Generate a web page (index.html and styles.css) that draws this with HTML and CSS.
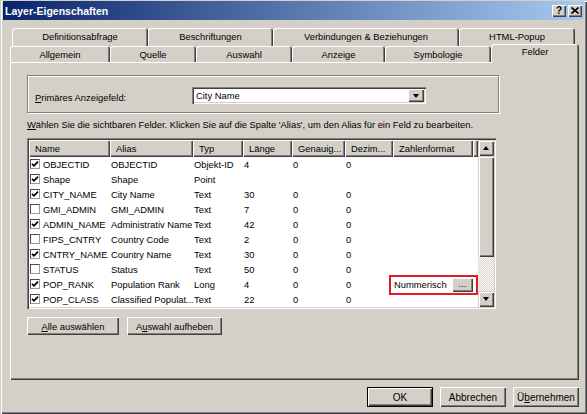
FILE: index.html
```html
<!DOCTYPE html>
<html lang="de">
<head>
<meta charset="utf-8">
<title>Layer-Eigenschaften</title>
<link rel="stylesheet" href="styles.css">
</head>
<body>
<div class="window">
  <div class="titlebar">
    <span class="title">Layer-Eigenschaften</span>
    <div class="tb-buttons">
      <span class="tb-btn help">?</span>
      <span class="tb-btn close"><svg width="8" height="7" viewBox="0 0 8 7"><path d="M0.5 0.5 L7.5 6.5 M7.5 0.5 L0.5 6.5" stroke="#000" stroke-width="1.6"/></svg></span>
    </div>
  </div>

  <div class="tabs">
    <div class="tabrow back">
      <div class="tab t-def">Definitionsabfrage</div>
      <div class="tab t-bes">Beschriftungen</div>
      <div class="tab t-ver">Verbindungen &amp; Beziehungen</div>
      <div class="tab t-html">HTML-Popup</div>
    </div>
    <div class="tabrow front">
      <div class="tab t-all">Allgemein</div>
      <div class="tab t-que">Quelle</div>
      <div class="tab t-aus">Auswahl</div>
      <div class="tab t-anz">Anzeige</div>
      <div class="tab t-sym">Symbologie</div>
      <div class="tab t-fel active">Felder</div>
    </div>
  </div>

  <div class="panel">
    <div class="group">
      <div class="field-row">
        <span class="field-label"><u>P</u>rimäres Anzeigefeld:</span>
        <div class="combo">
          <span class="combo-text">City Name</span>
          <span class="combo-btn"><span class="arrow-down"></span></span>
        </div>
      </div>
    </div>

    <div class="hint"><u>W</u>ählen Sie die sichtbaren Felder. Klicken Sie auf die Spalte 'Alias', um den Alias für ein Feld zu bearbeiten.</div>

    <div class="listview">
      <div class="lv-body">
        <table class="lv">
          <colgroup>
            <col class="c-name"><col class="c-alias"><col class="c-typ"><col class="c-len"><col class="c-gen"><col class="c-dez"><col class="c-fmt"><col class="c-fill">
          </colgroup>
          <thead>
            <tr><th>Name</th><th>Alias</th><th>Typ</th><th>Länge</th><th>Genauig...</th><th>Dezim...</th><th>Zahlenformat</th><th></th></tr>
          </thead>
          <tbody>
            <tr><td class="nm"><span class="cb on"></span>OBJECTID</td><td>OBJECTID</td><td>Objekt-ID</td><td>4</td><td>0</td><td>0</td><td></td><td></td></tr>
            <tr><td class="nm"><span class="cb on"></span>Shape</td><td>Shape</td><td>Point</td><td></td><td></td><td></td><td></td><td></td></tr>
            <tr><td class="nm"><span class="cb on"></span>CITY_NAME</td><td>City Name</td><td>Text</td><td>30</td><td>0</td><td>0</td><td></td><td></td></tr>
            <tr><td class="nm"><span class="cb"></span>GMI_ADMIN</td><td>GMI_ADMIN</td><td>Text</td><td>7</td><td>0</td><td>0</td><td></td><td></td></tr>
            <tr><td class="nm"><span class="cb on"></span>ADMIN_NAME</td><td>Administrativ Name</td><td>Text</td><td>42</td><td>0</td><td>0</td><td></td><td></td></tr>
            <tr><td class="nm"><span class="cb"></span>FIPS_CNTRY</td><td>Country Code</td><td>Text</td><td>2</td><td>0</td><td>0</td><td></td><td></td></tr>
            <tr><td class="nm"><span class="cb on"></span>CNTRY_NAME</td><td>Country Name</td><td>Text</td><td>30</td><td>0</td><td>0</td><td></td><td></td></tr>
            <tr><td class="nm"><span class="cb"></span>STATUS</td><td>Status</td><td>Text</td><td>50</td><td>0</td><td>0</td><td></td><td></td></tr>
            <tr><td class="nm"><span class="cb on"></span>POP_RANK</td><td>Population Rank</td><td>Long</td><td>4</td><td>0</td><td>0</td><td class="fmt-cell"><div class="fmt"><span>Nummerisch</span><span class="mini-btn">...</span><span class="highlight"></span></div></td><td></td></tr>
            <tr><td class="nm"><span class="cb on"></span>POP_CLASS</td><td>Classified Populat...</td><td>Text</td><td>22</td><td>0</td><td>0</td><td></td><td></td></tr>
          </tbody>
        </table>
      </div>
      <div class="vscroll">
        <span class="sb-btn"><span class="arrow-up"></span></span>
        <span class="sb-thumb"></span>
        <span class="sb-track"></span>
        <span class="sb-btn"><span class="arrow-down"></span></span>
      </div>
    </div>

    <div class="btn-row">
      <span class="btn b-all"><u>A</u>lle auswählen</span>
      <span class="btn b-none">A<u>u</u>swahl aufheben</span>
    </div>
  </div>

  <div class="footer">
    <span class="btn dlg default">OK</span>
    <span class="btn dlg">Abbrechen</span>
    <span class="btn dlg">Ü<u>b</u>ernehmen</span>
  </div>
</div>
</body>
</html>
```

FILE: styles.css
```css
* { box-sizing: border-box; }

body {
  margin: 0;
  background: #d4d0c8;
  font-family: "Liberation Sans", Arial, sans-serif;
  font-size: 9.4px;
  color: #000;
}

u { text-decoration: underline; text-underline-offset: 1px; }

.window {
  width: 587px;
  height: 414px;
  background: #d4d0c8;
  padding: 1px 3px 0 3px;
  box-shadow: inset 1px 1px #d4d0c8, inset 2px 2px #ffffff, inset -1px -1px #404040, inset -2px -2px #808080;
  overflow: hidden;
}

/* title bar */
.titlebar {
  height: 19px;
  display: flex;
  align-items: center;
  justify-content: space-between;
  padding: 0 2px 0 2px;
  background: linear-gradient(to right, #0a246a, #a6caf0);
}
.title {
  color: #fff;
  font-weight: bold;
  font-size: 10.5px;
}
.tb-buttons { display: flex; gap: 2px; }
.tb-btn {
  width: 14px;
  height: 12px;
  display: flex;
  align-items: center;
  justify-content: center;
  background: #d4d0c8;
  box-shadow: inset 1px 1px #ffffff, inset -1px -1px #404040, inset -2px -2px #808080;
  font-weight: bold;
  font-size: 10px;
  line-height: 1;
}

/* tabs */
.tabs { margin-top: 8px; }
.tabrow { display: flex; }
.tabrow.back { margin-left: 9px; height: 18px; }
.tabrow.front { margin-left: 7px; height: 16px; }
.tab {
  height: 100%;
  display: flex;
  align-items: center;
  justify-content: center;
  background: #d4d0c8;
  border-radius: 3px 3px 0 0;
  box-shadow: inset 1px 1px #ffffff, inset -1px 0 #404040, inset -2px 0 #808080;
  white-space: nowrap;
}
.tabrow.back .tab { padding-bottom: 1px; }
.t-def { width: 136px; }
.t-bes { width: 125px; }
.t-ver { width: 186px; }
.t-html { width: 116px; }
.t-all { width: 100px; }
.t-que { width: 86px; }
.t-aus { width: 96px; }
.t-anz { width: 93px; }
.t-sym { width: 106px; }
.t-fel { width: 88px; }
.tab.active {
  position: relative;
  z-index: 1;
  height: 19px;
  margin-top: -2px;
  align-items: flex-start;
  padding-top: 2px;
}

/* panel */
.panel {
  margin-left: 7px;
  width: 569px;
  height: 318px;
  padding: 13px 0 0 17px;
  box-shadow: inset 1px 1px #ffffff, inset -1px -1px #404040, inset -2px -2px #808080;
}

.group {
  width: 472px;
  height: 38px;
  padding: 11px 0 0 7px;
  border: 1px solid #808080;
  box-shadow: inset 1px 1px #ffffff, 1px 1px 0 #ffffff;
}
.field-row { display: flex; align-items: center; height: 17px; }
.field-label { width: 157px; padding-top: 3px; }
.combo {
  width: 234px;
  height: 17px;
  display: flex;
  align-items: center;
  justify-content: space-between;
  background: #fff;
  padding: 2px;
  box-shadow: inset 1px 1px #808080, inset 2px 2px #404040, inset -1px -1px #ffffff, inset -2px -2px #d4d0c8;
}
.combo-text { padding-left: 2px; }
.combo-btn {
  width: 16px;
  height: 13px;
  display: flex;
  align-items: center;
  justify-content: center;
  background: #d4d0c8;
  box-shadow: inset 1px 1px #ffffff, inset -1px -1px #404040, inset -2px -2px #808080;
}

.arrow-down {
  width: 0; height: 0;
  border-left: 3.5px solid transparent;
  border-right: 3.5px solid transparent;
  border-top: 4px solid #000;
}
.arrow-up {
  width: 0; height: 0;
  border-left: 3.5px solid transparent;
  border-right: 3.5px solid transparent;
  border-bottom: 4px solid #000;
}

.hint {
  margin-top: 6px;
  height: 12px;
  line-height: 12px;
  white-space: nowrap;
}

/* list view */
.listview {
  margin-top: 7px;
  width: 469px;
  height: 171px;
  display: flex;
  padding: 2px;
  background: #fff;
  box-shadow: inset 1px 1px #808080, inset 2px 2px #404040, inset -1px -1px #ffffff, inset -2px -2px #d4d0c8;
}
.lv-body { width: 449px; height: 167px; overflow: hidden; }
table.lv {
  border-collapse: collapse;
  table-layout: fixed;
  width: 449px;
}
.c-name { width: 81px; }
.c-alias { width: 83px; }
.c-typ { width: 50px; }
.c-len { width: 49px; }
.c-gen { width: 53px; }
.c-dez { width: 48px; }
.c-fmt { width: 80px; }
.c-fill { width: 5px; }
.lv th {
  height: 17px;
  padding: 0 0 0 6px;
  text-align: left;
  font-weight: normal;
  background: #d4d0c8;
  box-shadow: inset 1px 1px #ffffff, inset -1px -1px #404040, inset -2px -2px #808080;
  white-space: nowrap;
  overflow: hidden;
}
.lv td {
  height: 15px;
  padding: 0 0 0 1px;
  white-space: nowrap;
  overflow: hidden;
  vertical-align: middle;
}
.lv td.nm { padding-left: 1px; }
.cb {
  display: inline-block;
  width: 10px;
  height: 10px;
  margin-right: 3px;
  vertical-align: -1px;
  background: #fff;
  border: 1px solid #4a4a4a;
  border-right-color: #9a9a9a;
  border-bottom-color: #9a9a9a;
}
.cb.on {
  background: #fff url("data:image/svg+xml;utf8,<svg xmlns='http://www.w3.org/2000/svg' width='8' height='8' viewBox='0 0 8 8'><path d='M1 3.8 L3 5.8 L7 1.6' fill='none' stroke='black' stroke-width='1.7'/></svg>") no-repeat center;
}
.lv td.fmt-cell { overflow: visible; }
.fmt {
  position: relative;
  display: flex;
  align-items: center;
  justify-content: space-between;
}
.mini-btn {
  width: 21px;
  height: 14px;
  display: flex;
  align-items: center;
  justify-content: center;
  padding-bottom: 3px;
  background: #d4d0c8;
  box-shadow: inset 1px 1px #ffffff, inset -1px -1px #404040, inset -2px -2px #808080;
}
.highlight {
  position: absolute;
  left: -5px;
  top: -3px;
  right: -5px;
  bottom: -3px;
  border: 2px solid #e41c22;
}

.vscroll {
  width: 16px;
  display: flex;
  flex-direction: column;
}
.sb-btn {
  height: 16px;
  display: flex;
  align-items: center;
  justify-content: center;
  background: #d4d0c8;
  box-shadow: inset 1px 1px #d4d0c8, inset 2px 2px #ffffff, inset -1px -1px #404040, inset -2px -2px #808080;
}
.sb-thumb {
  height: 101px;
  background: #d4d0c8;
  box-shadow: inset 1px 1px #d4d0c8, inset 2px 2px #ffffff, inset -1px -1px #404040, inset -2px -2px #808080;
}
.sb-track {
  flex: 1;
  background: repeating-conic-gradient(#ffffff 0 25%, #d4d0c8 0 50%) 0 0 / 2px 2px;
}

/* buttons */
.btn-row {
  margin-top: 8px;
  display: flex;
  gap: 8px;
}
.btn {
  height: 18px;
  display: flex;
  align-items: center;
  justify-content: center;
  background: #d4d0c8;
  box-shadow: inset 1px 1px #ffffff, inset -1px -1px #404040, inset -2px -2px #808080;
  white-space: nowrap;
}
.b-all { width: 92px; }
.b-none { width: 95px; }

.footer {
  margin: 7px 0 0 7px;
  width: 569px;
  display: flex;
  justify-content: flex-end;
  gap: 7px;
}
.btn.dlg { width: 66px; height: 20px; font-size: 10px; }
.btn.default {
  border: 1px solid #000;
  box-shadow: inset 1px 1px #ffffff, inset -1px -1px #404040, inset -2px -2px #808080;
}
```
